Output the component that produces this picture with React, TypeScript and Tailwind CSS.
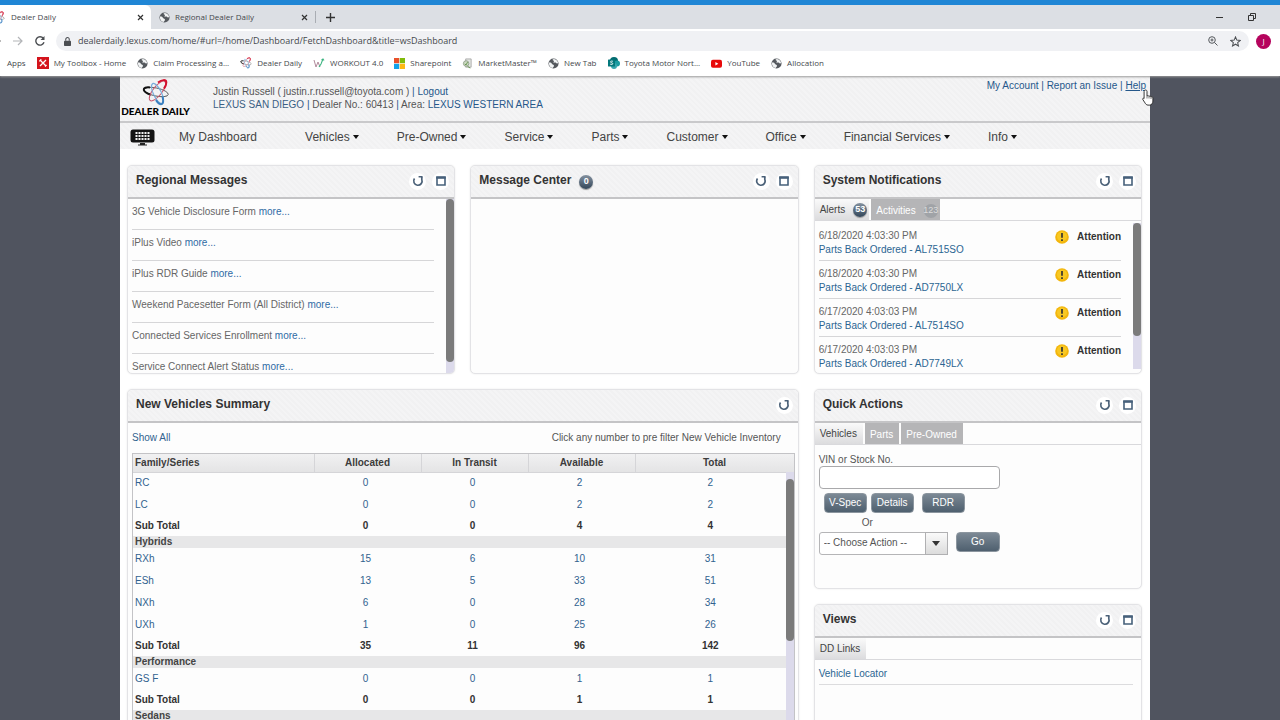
import type { ReactNode } from "react";

const HATCH =
  "bg-[repeating-linear-gradient(45deg,#f4f4f5_0px,#f4f4f5_2px,#f1f1f2_2px,#f1f1f2_4px)]";

function Globe({ className = "size-[11px]" }: { className?: string }) {
  return (
    <svg viewBox="0 0 24 24" className={className} aria-hidden="true">
      <circle cx="12" cy="12" r="11" fill="#55595e" />
      <path d="M3 9c3 0 5 2 6 4s4 1 4 4-2 3-3 5C5 21 2 17 2 12z" fill="#f1f3f4" />
      <path d="M10 3c0 3 3 2 3 4s-2 2-1 3 4-1 6 1 3 1 4 0c0-4-4-8-9-9z" fill="#f1f3f4" />
    </svg>
  );
}

function Atom({ className }: { className?: string }) {
  return (
    <svg viewBox="0 0 28 27" className={className} fill="none" aria-hidden="true">
      <ellipse cx="14" cy="13" rx="12.500" ry="4" transform="rotate(12 14 13)" stroke="#555" strokeWidth=".9" />
      <path d="M8 8.500C4 8 1.500 9 1.800 10.800c.3 1.700 3.200 3.600 7 4.900" stroke="#111" strokeWidth="2" />
      <ellipse cx="15.500" cy="12" rx="12" ry="4.500" transform="rotate(-52 15.500 12)" stroke="#c9526a" strokeWidth="1" />
      <path d="M16 3.500c4-3 8-3.200 8.300-.4.200 2-.6 4-2.300 6.500" stroke="#d3122f" strokeWidth="2" />
      <ellipse cx="15.500" cy="14.500" rx="11" ry="4" transform="rotate(64 15.500 14.500)" stroke="#79aedb" strokeWidth="1.200" />
      <path d="M14 21c2 3.500 4.500 5 6 4 1.500-1.200 1.400-4 .5-7.500" stroke="#3b7fc0" strokeWidth="2" />
    </svg>
  );
}

function ToolboxIcon() {
  return (
    <svg viewBox="0 0 12 12" className="size-[12px]" aria-hidden="true">
      <rect width="12" height="12" fill="#d4141c" />
      <path d="M3 3l6 6M9 3L3 9" stroke="#fff" strokeWidth="1.300" />
      <path d="M2.300 4.300l2-2M8 9.500l1.500-1.500" stroke="#fff" strokeWidth="1.200" />
    </svg>
  );
}

function WorkoutIcon() {
  return (
    <svg viewBox="0 0 12 12" className="size-[12px]" fill="none" aria-hidden="true">
      <path d="M1 3l2 7 2-5 2 5" stroke="#b08a9a" strokeWidth="1" />
      <path d="M6 10l2-3 2-5M8.500 3L10 2l1 1.500" stroke="#3cb480" strokeWidth="1.100" />
    </svg>
  );
}

function MicrosoftIcon() {
  return (
    <svg viewBox="0 0 11 11" className="size-[11px]" aria-hidden="true">
      <rect width="5.200" height="5.200" fill="#e8502a" />
      <rect x="5.800" width="5.200" height="5.200" fill="#80bb0a" />
      <rect y="5.800" width="5.200" height="5.200" fill="#12a2ea" />
      <rect x="5.800" y="5.800" width="5.200" height="5.200" fill="#fdb813" />
    </svg>
  );
}

function MarketIcon() {
  return (
    <svg viewBox="0 0 12 12" className="size-[11px]" fill="none" aria-hidden="true">
      <path d="M4 1h6v9H4z" fill="#e3e6e2" stroke="#999" strokeWidth=".8" />
      <circle cx="4.500" cy="6" r="3" fill="#cfdcc5" stroke="#8a9a84" strokeWidth=".9" />
      <path d="M3 6.500l1.500 1L6 4.500M6 9l3 2" stroke="#5d8f45" strokeWidth="1" />
    </svg>
  );
}

function SharepointIcon() {
  return (
    <svg viewBox="0 0 12 12" className="size-[12px]" aria-hidden="true">
      <circle cx="6" cy="4" r="4" fill="#036c70" />
      <circle cx="9" cy="6.500" r="3" fill="#1a9ba1" />
      <circle cx="6" cy="9" r="3" fill="#37a6ae" />
      <rect y="2.500" width="7" height="7" rx=".6" fill="#03787c" />
      <path d="M5 4.500c-1-.8-2.800-.4-2.500.6.3 1 2.500.6 2.300 1.700-.2.900-1.800.9-2.700.2" stroke="#fff" strokeWidth=".9" fill="none" />
    </svg>
  );
}

function YoutubeIcon() {
  return (
    <svg viewBox="0 0 12 12" className="size-[11px]" aria-hidden="true">
      <rect y="2" width="12" height="8.500" rx="2" fill="#e80a0a" />
      <path d="M4.800 4.300v4l3.200-2z" fill="#fff" />
    </svg>
  );
}

const bookmarks: { label: string; icon: ReactNode }[] = [
  { label: "My Toolbox - Home", icon: <ToolboxIcon /> },
  { label: "Claim Processing a...", icon: <Globe /> },
  { label: "Dealer Daily", icon: <Atom className="size-[12px]" /> },
  { label: "WORKOUT 4.0", icon: <WorkoutIcon /> },
  { label: "Sharepoint", icon: <MicrosoftIcon /> },
  { label: "MarketMaster™", icon: <MarketIcon /> },
  { label: "New Tab", icon: <Globe /> },
  { label: "Toyota Motor Nort...", icon: <SharepointIcon /> },
  { label: "YouTube", icon: <YoutubeIcon /> },
  { label: "Allocation", icon: <Globe /> },
];

function CloseIcon() {
  return (
    <svg viewBox="0 0 7 7" className="size-[7px]" aria-hidden="true">
      <path d="M1 1l5 5M6 1L1 6" stroke="#333" strokeWidth="1.200" />
    </svg>
  );
}

function BrowserChrome() {
  return (
    <div className="relative z-10 shrink-0 bg-white font-['Open_Sans','Noto_Sans',sans-serif] text-[#45484c] shadow-[0_1px_2px_#9a9a9a]">
      <div className="h-[5px] bg-[#2086d5]" />
      <div className="flex h-6 bg-[#dcdfe4] text-[8px]">
        <div className="flex w-[151px] items-center rounded-tr-md bg-white pr-[7px]">
          <Atom className="-ml-2 size-[13px]" />
          <span className="flex-1 pl-[6px]">Dealer Daily</span>
          <button aria-label="Close Dealer Daily"><CloseIcon /></button>
        </div>
        <div className="flex w-[164px] items-center pr-[7px] pl-2">
          <Globe />
          <span className="flex-1 pl-[5px]">Regional Dealer Daily</span>
          <button aria-label="Close Regional Dealer Daily"><CloseIcon /></button>
        </div>
        <button aria-label="New tab" className="my-[6px] border-l border-[#a9adb3] px-[10px]">
          <svg viewBox="0 0 9 9" className="size-[9px]"><path d="M4.500 0v9M0 4.500h9" stroke="#333" strokeWidth="1.400" /></svg>
        </button>
        <div className="flex flex-1 items-center justify-end gap-[25px] pr-6">
          <button aria-label="Minimize"><svg viewBox="0 0 7 7" className="size-[7px]"><path d="M0 3.500h7" stroke="#333" strokeWidth="1" /></svg></button>
          <button aria-label="Restore">
            <svg viewBox="0 0 8 8" className="size-[8px]" fill="none" stroke="#333" strokeWidth="1"><path d="M.5 2.500h5v5h-5zM2.500 2.500v-2h5v5h-2" /></svg>
          </button>
        </div>
      </div>
      <div className="flex h-6 items-center">
        <svg viewBox="0 0 48 12" className="h-3 w-12" fill="none" aria-hidden="true">
          <path d="M0 6h1" stroke="#777" strokeWidth="1.200" />
          <path d="M13 6h9M18 2l4 4-4 4" stroke="#b3b5b8" strokeWidth="1.200" />
          <path d="M43.300 3.300A4.200 4.200 0 1 0 44 7.200" stroke="#4a4d51" strokeWidth="1.400" />
          <path d="M44.500 1v4h-4z" fill="#4a4d51" />
        </svg>
        <div className="ml-2 flex h-5 flex-1 items-center rounded-full bg-[#f0f1f4] pr-2 pl-2">
          <svg viewBox="0 0 8 10" className="h-[9px] w-[7px]" aria-hidden="true">
            <rect y="4" width="8" height="6" rx=".8" fill="#4a4d51" />
            <path d="M2 4V2.500a2 2 0 0 1 4 0V4" stroke="#4a4d51" strokeWidth="1.200" fill="none" />
          </svg>
          <input
            aria-label="Address"
            className="ml-[7px] min-w-0 flex-1 bg-transparent text-[9px] outline-none"
            defaultValue="dealerdaily.lexus.com/home/#url=/home/Dashboard/FetchDashboard&title=wsDashboard"
          />
          <svg viewBox="0 0 10 10" className="mr-3 size-[10px]" fill="none" stroke="#55585c" aria-hidden="true">
            <circle cx="4" cy="4" r="3.300" strokeWidth="1" /><path d="M6.500 6.500L9.500 9.500M4 2.500v3M2.500 4h3" strokeWidth="1" />
          </svg>
          <svg viewBox="0 0 24 24" className="size-[11px]" fill="none" stroke="#4a4d51" strokeWidth="2.200" aria-hidden="true">
            <path d="M12 2l2.900 7 7.500.6-5.700 4.900 1.800 7.300L12 17.900l-6.500 3.900 1.800-7.300L1.600 9.600l7.500-.6z" />
          </svg>
        </div>
        <div className="mr-[9px] ml-[7px] flex size-[15px] items-center justify-center rounded-full bg-[#b5045d] text-[8px] text-white">J</div>
      </div>
      <div className="flex h-[23px] items-center gap-[11px] pb-[3px] pl-[7px] text-[8px]">
        <a href="#apps">Apps</a>
        {bookmarks.map((b) => (
          <a key={b.label} href="#bookmark" className="flex items-center gap-[5px] whitespace-nowrap">
            {b.icon}
            {b.label}
          </a>
        ))}
      </div>
    </div>
  );
}

function Header() {
  return (
    <header className={`flex h-[47px] border-b-2 border-[#c9c9cb] ${HATCH}`}>
      <div className="flex w-[93px] flex-col items-center pt-[3px] pr-[22px]">
        <Atom className="h-[27px] w-[28px] shrink-0" />
        <span className="font-[Lato,sans-serif] text-[10px] leading-[10px] font-black whitespace-nowrap text-black">DEALER DAILY</span>
      </div>
      <div className="flex-1 pt-[9px] text-[10px] leading-[13px] text-[#555]">
        <p>
          Justin Russell ( justin.r.russell@toyota.com ) <span className="text-[#25578a]">|</span>{" "}
          <a href="#logout" className="text-[#25578a]">Logout</a>
        </p>
        <p>
          <a href="#dealer" className="text-[#3b5f84]">LEXUS SAN DIEGO</a> <span className="text-[#25578a]">|</span> Dealer No.: 60413{" "}
          <span className="text-[#25578a]">|</span> Area: <a href="#area" className="text-[#25578a]">LEXUS WESTERN AREA</a>
        </p>
      </div>
      <div className="relative pt-[3px] pr-[4px] text-[10px] leading-[13px] text-[#25578a]">
        <a href="#account">My Account</a> | <a href="#issue">Report an Issue</a> |{" "}
        <a href="#help" className="underline">Help</a>
        <svg viewBox="0 0 12 17" className="absolute top-[13px] -right-[4px] h-[17px] w-[12px]" aria-hidden="true">
          <path d="M3.500 1c1 0 1.500.6 1.500 1.500V7c.8-.6 1.800-.4 2 .4.700-.6 1.700-.3 1.900.5.900-.4 2 .1 2 1.200v3c0 2-1.400 4-3 4H6c-1.500 0-2.300-1-3-2.200L.8 10.500C.3 9.500 1.300 8.800 2.100 9.500V2.500C2.100 1.600 2.700 1 3.500 1z" fill="#fff" stroke="#222" strokeWidth=".9" />
          <path d="M5 7v2.500M7 7.500v2M9 8v2" stroke="#444" strokeWidth=".7" />
        </svg>
      </div>
    </header>
  );
}

const menus = ["Vehicles", "Pre-Owned", "Service", "Parts", "Customer", "Office", "Financial Services", "Info"];

function Caret() {
  return <svg viewBox="0 0 6 4" className="ml-[3px] h-1 w-[6px]" aria-hidden="true"><path d="M0 0h6L3 4z" fill="#111" /></svg>;
}

function Nav() {
  return (
    <nav className={`flex h-[26px] items-center pt-[2px] pl-[10px] text-[12px] text-[#444] ${HATCH}`}>
      <svg viewBox="0 0 25 17" className="h-[17px] w-[25px]" aria-label="Keyboard">
        <rect x=".5" y=".5" width="24" height="13" rx="2.500" fill="#141414" />
        <path d="M5.500 4h14M5.500 7h14M5.500 10h14" stroke="#f2f2f2" strokeWidth="2" strokeDasharray="2 1" />
        <path d="M10 14h5v1.500h2v1H8v-1h2z" fill="#222" />
      </svg>
      <a href="#dashboard" className="mr-[10px] ml-6">My Dashboard</a>
      {menus.map((m) => (
        <button key={m} className="ml-[38px] flex items-center whitespace-nowrap">
          {m}
          <Caret />
        </button>
      ))}
    </nav>
  );
}

function RoundButton({ label, children }: { label: string; children: ReactNode }) {
  return (
    <button aria-label={label} className="flex size-[17px] items-center justify-center rounded-full bg-white">
      {children}
    </button>
  );
}

function Panel({ title, badge, single, className = "", children }: {
  title: string; badge?: string; single?: boolean; className?: string; children?: ReactNode;
}) {
  return (
    <section className={`flex flex-col overflow-hidden rounded-[5px] border border-[#e3e3e6] bg-[#fdfdfd] shadow-[0_0_2px_#e8e8e8] ${className}`}>
      <div className={`flex h-[33px] shrink-0 items-center border-b-2 border-[#c4c4c6] pr-[5px] pb-1 pl-2 ${HATCH}`}>
        <h2 className="text-[12px] font-bold text-[#333]">{title}</h2>
        {badge && <span className="pt-1"><Count value={badge} /></span>}
        <div className="ml-auto flex gap-[6px] pt-[3px]">
          <RoundButton label="Refresh">
            <svg viewBox="0 0 12 12" className="size-[12px]" aria-hidden="true">
              <path d="M2.500 3.600A4.200 4.200 0 1 0 9.800 4.500V2" stroke="#4b6178" strokeWidth="1.700" fill="none" />
              <path d="M6.600 1.800h4" stroke="#4b6178" strokeWidth="1.600" />
            </svg>
          </RoundButton>
          {!single && (
            <RoundButton label="Maximize">
              <svg viewBox="0 0 10 10" className="size-[10px]" aria-hidden="true">
                <path d="M1 1.500h8v7.500H1z" stroke="#47617b" strokeWidth="1.600" fill="#fff" />
                <path d="M.2 1.500h9.600" stroke="#47617b" strokeWidth="2.400" />
              </svg>
            </RoundButton>
          )}
        </div>
      </div>
      {children}
    </section>
  );
}

function Count({ value, faded }: { value: string; faded?: boolean }) {
  return (
    <span className={`ml-2 flex size-[14px] items-center justify-center rounded-full text-[9px] leading-none ${
      faded ? "bg-[#a0a3a7] text-[#dcdcdc]" : "bg-linear-to-b from-[#8592a0] to-[#34475a] font-bold text-white shadow-[0_1px_1px_#999]"}`}>
      {value}
    </span>
  );
}

function Tabs({ items }: { items: { label: string; count?: string }[] }) {
  return (
    <div role="tablist" className="flex h-[22px] shrink-0 gap-[2px] border-b border-[#d9d9dc] text-[10px]">
      {items.map((t, i) => (
        <button
          key={t.label}
          role="tab"
          aria-selected={i === 0}
          className={`flex items-center pl-[5px] ${t.count ? "pr-[2px]" : "pr-[6px]"} ${
            i === 0 ? "bg-linear-to-b from-[#fafafa] to-[#dcdcde] text-[#444]" : "bg-[#b5b5b7] pt-[2px] text-white"}`}
        >
          {t.label}
          {t.count && <Count value={t.count} faded={i > 0} />}
        </button>
      ))}
    </div>
  );
}

const messages = [
  "3G Vehicle Disclosure Form", "iPlus Video", "iPlus RDR Guide",
  "Weekend Pacesetter Form (All District)", "Connected Services Enrollment", "Service Connect Alert Status",
];

const alerts = [
  ["6/18/2020 4:03:30 PM", "AL7515SO"], ["6/18/2020 4:03:30 PM", "AD7750LX"],
  ["6/17/2020 4:03:03 PM", "AL7514SO"], ["6/17/2020 4:03:03 PM", "AD7749LX"],
];

type Row = { name: string; values?: number[]; total?: boolean };
const rows: Row[] = [
  { name: "RC", values: [0, 0, 2, 2] },
  { name: "LC", values: [0, 0, 2, 2] },
  { name: "Sub Total", values: [0, 0, 4, 4], total: true },
  { name: "Hybrids" },
  { name: "RXh", values: [15, 6, 10, 31] },
  { name: "ESh", values: [13, 5, 33, 51] },
  { name: "NXh", values: [6, 0, 28, 34] },
  { name: "UXh", values: [1, 0, 25, 26] },
  { name: "Sub Total", values: [35, 11, 96, 142], total: true },
  { name: "Performance" },
  { name: "GS F", values: [0, 0, 1, 1] },
  { name: "Sub Total", values: [0, 0, 1, 1], total: true },
  { name: "Sedans" },
];

function VehicleTable() {
  return (
    <div className="relative mr-[3px] ml-1 border border-[#c3c3c6]">
      <table className="w-full table-fixed border-collapse text-[10px]">
        <colgroup>
          <col className="w-[181px]" />
          <col className="w-[107px]" />
          <col className="w-[107px]" />
          <col className="w-[107px]" />
          <col />
        </colgroup>
        <thead className="bg-linear-to-b from-[#f1f1f2] to-[#e4e4e5] text-[#3c3c3c]">
          <tr className="h-[18px] border-b border-[#d5d5d8]">
            <th className="border-r border-[#d5d5d8] p-0 pl-[2px] text-left">Family/Series</th>
            <th className="border-r border-[#d5d5d8] p-0">Allocated</th>
            <th className="border-r border-[#d5d5d8] p-0">In Transit</th>
            <th className="border-r border-[#d5d5d8] p-0">Available</th>
            <th className="p-0">Total</th>
          </tr>
        </thead>
        <tbody>
          {rows.map((r, i) =>
            !r.values ? (
              <tr key={i} className="h-3 bg-[#e7e7e8]">
                <th colSpan={5} className="p-0 pl-[2px] text-left leading-[12px] text-[#444]">{r.name}</th>
              </tr>
            ) : (
              <tr key={i} className={r.total ? "h-5 font-bold text-[#333]" : "h-[22px] text-[#31628f]"}>
                <td className="p-0 pl-[2px] leading-4">{r.total ? r.name : <a href="#series">{r.name}</a>}</td>
                {r.values.map((v, j) => (
                  <td key={j} className="p-0 pr-1 text-center leading-4 last:pr-2">{r.total ? v : <a href="#inventory">{v}</a>}</td>
                ))}
              </tr>
            ),
          )}
        </tbody>
      </table>
      <div className="absolute top-[18px] right-0 bottom-0 w-2 bg-[#dcdaeb] pt-[7px]">
        <div className="h-[162px] rounded-[4px] bg-[#7b7b7b]" />
      </div>
    </div>
  );
}

function ActionButton({ children, width }: { children: string; width: string }) {
  return (
    <button className={`h-5 rounded-[4px] border border-[#8c969f] bg-linear-to-b from-[#7c8995] to-[#4f606f] pb-[2px] text-[10px] text-white ${width}`}>
      {children}
    </button>
  );
}

function QuickActions() {
  return (
    <form className="flex flex-col px-1 pt-[9px] text-[10px] text-[#555]" onSubmit={(e) => e.preventDefault()}>
      <label htmlFor="vin" className="leading-[12px]">VIN or Stock No.</label>
      <input id="vin" className="h-[23px] w-[181px] rounded-[4px] border border-[#a9a9ab] bg-white px-1" />
      <div className="flex pt-1 pl-[5px]">
        <ActionButton width="w-[43px]">V-Spec</ActionButton>
        <ActionButton width="ml-1 w-[43px]">Details</ActionButton>
        <ActionButton width="ml-2 w-[43px]">RDR</ActionButton>
      </div>
      <span className="pt-1 pl-[43px] leading-[12px]">Or</span>
      <div className="flex gap-2 pt-[3px]">
        <div className="relative">
          <select aria-label="Choose Action" className="h-[23px] w-[129px] appearance-none rounded-[3px] border border-[#b5b5b7] bg-white pb-[2px] pl-1">
            <option>-- Choose Action --</option>
          </select>
          <span className="pointer-events-none absolute inset-y-0 right-0 flex w-[23px] items-center justify-center border border-[#b0b0b2] bg-linear-to-b from-[#fafafa] to-[#dcdcdc]">
            <svg viewBox="0 0 8 5" className="h-[5px] w-2"><path d="M0 0h8L4 5z" fill="#333" /></svg>
          </span>
        </div>
        <ActionButton width="w-11">Go</ActionButton>
      </div>
    </form>
  );
}

export default function App() {
  return (
    <div className="flex h-screen flex-col overflow-hidden bg-[#50545f] font-['Liberation_Sans',Arial,sans-serif]">
      <BrowserChrome />
      <div className="min-h-0 flex-1 pr-[10px]">
        <main className="mx-auto h-full max-w-[1030px] bg-white">
          <Header />
          <Nav />
          <div className="grid grid-cols-3 gap-[15px] pt-[16px] pr-2 pl-[7px]">
            <Panel title="Regional Messages" className="h-[209px]">
              <div className="flex min-h-0 flex-1">
                <ul className="flex-1 overflow-hidden pr-3 pl-1 text-[10px] text-[#666]">
                  {messages.map((m) => (
                    <li key={m} className="h-[31px] border-b border-[#d6d6d8] pt-[7px] leading-[12px]">
                      {m} <a href="#more" className="text-[#2f6ba5]">more...</a>
                    </li>
                  ))}
                </ul>
                <div className="w-2 bg-[#dcdaeb]"><div className="h-[163px] rounded-[4px] bg-[#7b7b7b]" /></div>
              </div>
            </Panel>
            <Panel title="Message Center" badge="0" className="h-[209px]" />
            <Panel title="System Notifications" className="h-[209px]">
              <Tabs items={[{ label: "Alerts", count: "53" }, { label: "Activities", count: "123" }]} />
              <div className="mb-1 flex min-h-0 flex-1 pt-[2px]">
                <ul className="flex-1 overflow-hidden pr-3 pl-1 text-[10px]">
                  {alerts.map(([date, part]) => (
                    <li key={part} className="flex h-[38px] border-b border-[#d6d6d8] pt-[6px] leading-[14px]">
                      <div className="flex-1 text-[#666]">
                        <p>{date}</p>
                        <a href="#part" className="text-[#2b6592]">Parts Back Ordered - {part}</a>
                      </div>
                      <svg viewBox="0 0 14 14" className="mt-[1px] size-[14px]" aria-hidden="true">
                        <circle cx="7" cy="7" r="6.800" fill="#f3b60d" />
                        <circle cx="7" cy="6.500" r="5" fill="#f8c823" />
                        <path d="M7 3v4.800M7 9.300v1.700" stroke="#333" strokeWidth="1.700" />
                      </svg>
                      <strong className="pt-[1px] pl-2 text-[#333]">Attention</strong>
                    </li>
                  ))}
                </ul>
                <div className="w-2 bg-[#dcdaeb]"><div className="h-[113px] rounded-[4px] bg-[#7b7b7b]" /></div>
              </div>
            </Panel>

            <Panel title="New Vehicles Summary" single className="col-span-2 row-span-2">
              <div className="flex h-[30px] shrink-0 items-center justify-between pr-[17px] pb-[2px] pl-1 text-[10px] text-[#555]">
                <a href="#all" className="text-[#31628f]">Show All</a>
                <span>Click any number to pre filter New Vehicle Inventory</span>
              </div>
              <VehicleTable />
            </Panel>
            <Panel title="Quick Actions" className="h-[200px]">
              <Tabs items={[{ label: "Vehicles" }, { label: "Parts" }, { label: "Pre-Owned" }]} />
              <QuickActions />
            </Panel>
            <Panel title="Views" className="h-[200px]">
              <Tabs items={[{ label: "DD Links" }]} />
              <div className="mr-2 ml-1 border-b border-[#dcdcde] pt-2 pb-1 text-[10px] leading-[12px]">
                <a href="#locator" className="text-[#2b6592]">Vehicle Locator</a>
              </div>
            </Panel>
          </div>
        </main>
      </div>
    </div>
  );
}
